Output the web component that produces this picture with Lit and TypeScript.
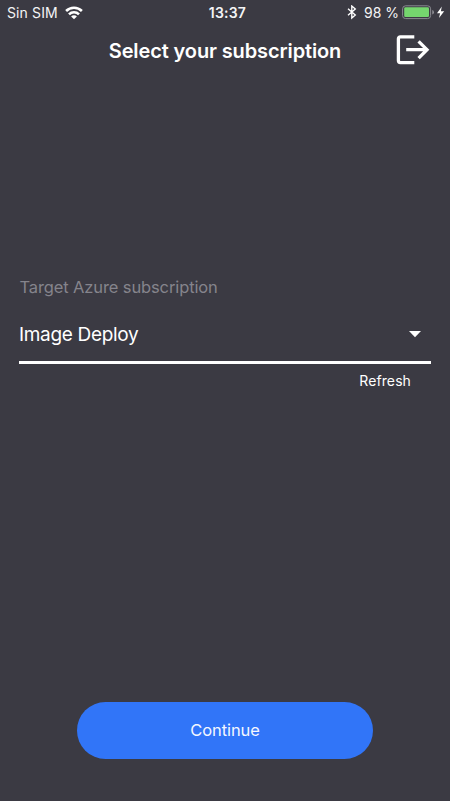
import { LitElement, html, css } from "lit";
import { customElement } from "lit/decorators.js";

@customElement("app-root")
export class AppRoot extends LitElement {
  static styles = css`
    :host {
      display: flex;
      flex-direction: column;
      box-sizing: border-box;
      height: 801px;
      width: 450px;
      background: #3b3a43;
      color: #fff;
      font-family: Inter, "Liberation Sans", sans-serif;
      white-space: nowrap;
      overflow: hidden;
    }
    svg { display: block; flex: none; }
    .status {
      display: grid;
      grid-template-columns: 1fr auto 1fr;
      align-items: center;
      height: 25px;
      padding: 0 5px 0 7px;
      box-sizing: border-box;
      font-size: 14px;
      line-height: 25px;
      color: #f4f4f6;
    }
    .left { display: flex; align-items: center; gap: 8px; }
    .carrier { width: 50px; letter-spacing: 0.12px; }
    .time { font-weight: 600; letter-spacing: 0.2px; padding-left: 3px; }
    .right { display: flex; align-items: center; justify-content: flex-end; }
    .percent { width: 35px; margin: 0 3px 0 7px; }
    .header {
      display: grid;
      grid-template-columns: 1fr auto 1fr;
      align-items: center;
      height: 50px;
      padding: 0 20px;
    }
    .title {
      grid-column: 2;
      margin: 0;
      padding-top: 2px;
      font-size: 20px;
      font-weight: 600;
      letter-spacing: -0.12px;
      line-height: 48px;
    }
    .logout {
      justify-self: end;
      padding: 0;
      border: 0;
      background: none;
      color: inherit;
    }
    .form {
      display: flex;
      flex-direction: column;
      margin: 200px 19px 0;
    }
    .label {
      padding-left: 0.5px;
      color: #85848c;
      font-size: 16.5px;
      line-height: 25px;
      letter-spacing: -0.12px;
    }
    .select {
      display: flex;
      align-items: center;
      justify-content: space-between;
      height: 63px;
      padding: 9px 9px 3px 0;
      box-sizing: border-box;
      margin-top: 1px;
      border-bottom: 3px solid #fff;
      font-size: 19px;
      letter-spacing: -0.32px;
    }
    .refresh {
      align-self: flex-end;
      margin: 6px 20px 0 0;
      font-size: 14px;
      line-height: 22px;
      letter-spacing: 0.1px;
    }
    .continue {
      margin: auto auto 42px 77px;
      width: 296px;
      height: 57.5px;
      padding: 0;
      border: 0;
      border-radius: 29px;
      background: #3175f8;
      color: #f4f7ff;
      font: inherit;
      font-size: 16.5px;
      letter-spacing: -0.08px;
    }
  `;

  render() {
    return html`
      <div class="status">
        <div class="left">
          <span class="carrier">Sin SIM</span>
          <svg width="18" height="14" viewBox="0 0 18 14" fill="none" stroke="#fff" stroke-width="2.6">
            <path d="M1.1 5A11.3 11.3 0 0 1 16.9 5" />
            <path d="M4 8.3A7.1 7.1 0 0 1 14 8.3" />
            <path d="M6.1 10.4A4 4 0 0 1 11.9 10.4L9 13.3Z" fill="#fff" stroke="none" />
          </svg>
        </div>
        <span class="time">13:37</span>
        <div class="right">
          <svg width="10" height="15" viewBox="0 0 10 15" fill="none" stroke="#fff" stroke-width="1.35">
            <path d="M1 3.8L8.3 10.1L4.8 13V1L8.3 3.9L1 10.2" />
          </svg>
          <span class="percent">98 %</span>
          <svg width="43" height="15" viewBox="0 0 43 15">
            <rect x=".6" y=".8" width="28" height="12.8" rx="3" fill="none" stroke="#898990" />
            <rect x="2.2" y="2.3" width="24.8" height="9.8" rx="1.3" fill="#75d66e" />
            <path d="M30.3 5Q31.9 5.6 31.9 7.3T30.3 9.6Z" fill="#96959b" />
            <path d="M39.8 1.5L35 8.2H38.1L37 13L42.2 6.2H38.9Z" fill="#fff" />
          </svg>
        </div>
      </div>
      <div class="header">
        <h1 class="title">Select your subscription</h1>
        <button class="logout" aria-label="Sign out">
          <svg width="34" height="30" viewBox="0 0 34 30" fill="none" stroke="#fff" stroke-width="3.3">
            <path d="M18.3 1.8H4.4Q2.4 1.8 2.4 3.8V25.6Q2.4 27.6 4.4 27.6H18.3" />
            <path d="M10.2 14.7H31M22.6 6.3L31 14.7L22.6 23.1" />
          </svg>
        </button>
      </div>
      <div class="form">
        <div class="label">Target Azure subscription</div>
        <div class="select">
          <span class="value">Image Deploy</span>
          <svg width="14" height="8" viewBox="0 0 14 8"><path d="M1 1H13L7 7.2Z" fill="#fff" /></svg>
        </div>
        <div class="refresh">Refresh</div>
      </div>
      <button class="continue">Continue</button>
    `;
  }
}
